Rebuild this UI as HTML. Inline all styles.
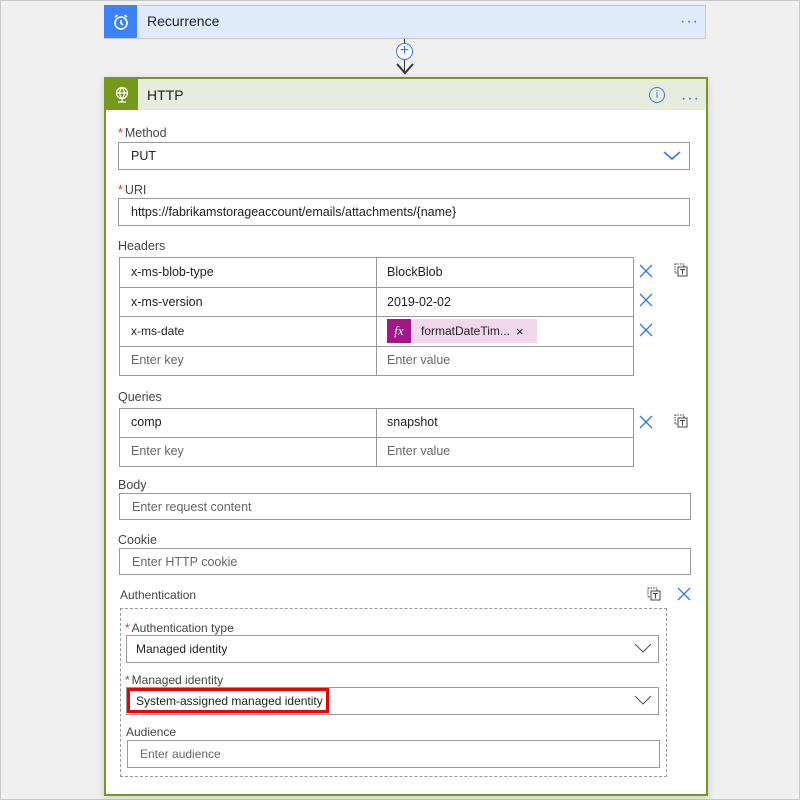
<!DOCTYPE html>
<html><head><style>
*{box-sizing:border-box;margin:0;padding:0}
body{width:800px;height:800px;background:#f0f0f0;font-family:"Liberation Sans",sans-serif;font-size:12.5px;color:#222;position:relative;overflow:hidden}
.a{position:absolute}
.lbl{position:absolute;color:#444;font-size:12.5px}
.lbl b{color:#d13438;font-weight:normal;margin-right:2px}
.in{position:absolute;border:1px solid #999;background:#fff;padding-left:12px;display:flex;align-items:center;font-size:12.5px}
.ph{color:#666}
.x{position:absolute;width:14px;height:14px}
.dots{position:absolute;color:#2f6fd0;font-size:16px;letter-spacing:1px;line-height:10px}
</style></head><body>
<div class="a" style="left:0;top:0;width:800px;height:800px;border:1px solid #c8c8c8"></div>
<!-- recurrence -->
<div class="a" style="left:104px;top:5px;width:602px;height:34px;background:#dfeafb;border:1px solid #c8c8c8"></div>
<div class="a" style="left:104px;top:5px;width:33px;height:33px;background:#3b82f6;display:flex;align-items:center;justify-content:center">
<svg width="18" height="18" viewBox="0 0 18 18" fill="none" stroke="#fff" stroke-width="1.6"><circle cx="9" cy="10" r="6"/><path d="M9 7v3.5l2 1.5M3 4l2.5-2M15 4l-2.5-2"/></svg></div>
<div class="a" style="left:147px;top:13px;font-size:14px">Recurrence</div>
<div class="dots" style="left:680px;top:17px">···</div>
<!-- connector -->
<div class="a" style="left:404px;top:39px;width:1px;height:34px;background:#333"></div>
<div class="a" style="left:396px;top:43px;width:17px;height:17px;border:1px solid #3b7bd4;border-radius:50%;background:#fff;color:#3b7bd4;font-size:16px;line-height:14px;text-align:center">+</div>
<svg class="a" style="left:395px;top:62px" width="20" height="14"><path d="M2 2l8 9 8-9" fill="none" stroke="#333" stroke-width="2"/></svg>
<!-- http card -->
<div class="a" style="left:104px;top:77px;width:604px;height:719px;background:#fff;border:2px solid #749a1c;box-shadow:0 2px 8px rgba(0,0,0,.15)"></div>
<div class="a" style="left:106px;top:79px;width:600px;height:31px;background:#e8ecdc"></div>
<div class="a" style="left:106px;top:79px;width:32px;height:31px;background:#749a1c;display:flex;align-items:center;justify-content:center">
<svg width="16" height="18" viewBox="0 0 16 18" fill="none" stroke="#fff" stroke-width="1.2"><circle cx="8" cy="7" r="5.5"/><path d="M2.5 7h11M8 1.5c-3 3-3 8 0 11M8 1.5c3 3 3 8 0 11M8 12.5v3M4 16h8"/></svg></div>
<div class="a" style="left:147px;top:87px;font-size:14px">HTTP</div>
<div class="a" style="left:649px;top:87px;width:16px;height:16px;border:1.3px solid #3b7bd4;border-radius:50%;color:#3b7bd4;font-size:11px;text-align:center;line-height:14px">i</div>
<div class="dots" style="left:681px;top:94px">···</div>

<div class="lbl" style="left:118px;top:126px"><b>*</b>Method</div>
<div class="in" style="left:118px;top:142px;width:572px;height:28px">PUT</div>
<svg class="a" style="left:663px;top:150px" width="18" height="12"><path d="M1 2l8 7 8-7" fill="none" stroke="#2f7bd8" stroke-width="1.6"/></svg>
<div class="lbl" style="left:118px;top:183px"><b>*</b>URI</div>
<div class="in" style="left:118px;top:198px;width:572px;height:28px">https://fabrikamstorageaccount/emails/attachments/{name}</div>

<div class="lbl" style="left:118px;top:239px">Headers</div>
<div class="a" style="left:119px;top:257px;width:515px;height:119px;border:1px solid #999;background:linear-gradient(#999,#999) 256px 0/1px 100% no-repeat"></div>
<div class="a" style="left:119px;top:287px;width:515px;height:1px;background:#999"></div>
<div class="a" style="left:119px;top:316px;width:515px;height:1px;background:#999"></div>
<div class="a" style="left:119px;top:346px;width:515px;height:1px;background:#999"></div>
<div class="a" style="left:131px;top:265px">x-ms-blob-type</div><div class="a" style="left:387px;top:265px">BlockBlob</div>
<div class="a" style="left:131px;top:295px">x-ms-version</div><div class="a" style="left:387px;top:295px">2019-02-02</div>
<div class="a" style="left:131px;top:324px;font-size:12px">x-ms-date</div>
<div class="a" style="left:387px;top:319px;width:150px;height:24px;background:#f2d7ec"></div>
<div class="a" style="left:387px;top:319px;width:24px;height:24px;background:#a4148a;color:#fff;font-family:'Liberation Serif',serif;font-style:italic;font-size:13px;text-align:center;line-height:23px">fx</div>
<div class="a" style="left:421px;top:324px;font-size:12px">formatDateTim...</div>
<div class="a" style="left:516px;top:324px;font-size:13px">×</div>
<div class="a ph" style="left:131px;top:353px">Enter key</div><div class="a ph" style="left:387px;top:353px">Enter value</div>

<div class="lbl" style="left:118px;top:390px">Queries</div>
<div class="a" style="left:119px;top:408px;width:515px;height:59px;border:1px solid #999;background:linear-gradient(#999,#999) 256px 0/1px 100% no-repeat"></div>
<div class="a" style="left:119px;top:437px;width:515px;height:1px;background:#999"></div>
<div class="a" style="left:131px;top:415px">comp</div><div class="a" style="left:387px;top:415px">snapshot</div>
<div class="a ph" style="left:131px;top:444px">Enter key</div><div class="a ph" style="left:387px;top:444px">Enter value</div>

<svg class="x" style="left:639px;top:264px" viewBox="0 0 14 14"><path d="M1 1l12 12M13 1L1 13" stroke="#2f7bd8" stroke-width="1.3"/></svg>
<svg class="x" style="left:639px;top:293px" viewBox="0 0 14 14"><path d="M1 1l12 12M13 1L1 13" stroke="#2f7bd8" stroke-width="1.3"/></svg>
<svg class="x" style="left:639px;top:323px" viewBox="0 0 14 14"><path d="M1 1l12 12M13 1L1 13" stroke="#2f7bd8" stroke-width="1.3"/></svg>
<svg class="x" style="left:639px;top:415px" viewBox="0 0 14 14"><path d="M1 1l12 12M13 1L1 13" stroke="#2f7bd8" stroke-width="1.3"/></svg>
<svg class="x" style="left:677px;top:587px" viewBox="0 0 14 14"><path d="M1 1l12 12M13 1L1 13" stroke="#2f7bd8" stroke-width="1.3"/></svg>
<svg class="x" style="left:674px;top:263px" viewBox="0 0 14 14" fill="none" stroke="#444"><rect x="1" y="1" width="9" height="9" stroke-dasharray="1.5 1"/><rect x="4" y="4" width="9" height="9" fill="#fff"/><path d="M6 6.5h5M8.5 6.5v5"/></svg>
<svg class="x" style="left:674px;top:414px" viewBox="0 0 14 14" fill="none" stroke="#444"><rect x="1" y="1" width="9" height="9" stroke-dasharray="1.5 1"/><rect x="4" y="4" width="9" height="9" fill="#fff"/><path d="M6 6.5h5M8.5 6.5v5"/></svg>
<svg class="x" style="left:647px;top:587px" viewBox="0 0 14 14" fill="none" stroke="#444"><rect x="1" y="1" width="9" height="9" stroke-dasharray="1.5 1"/><rect x="4" y="4" width="9" height="9" fill="#fff"/><path d="M6 6.5h5M8.5 6.5v5"/></svg>

<div class="lbl" style="left:118px;top:478px">Body</div>
<div class="in ph" style="left:119px;top:493px;width:572px;height:27px">Enter request content</div>
<div class="lbl" style="left:118px;top:533px">Cookie</div>
<div class="in ph" style="left:119px;top:548px;width:572px;height:27px">Enter HTTP cookie</div>

<div class="lbl" style="left:120px;top:588px;font-size:12px">Authentication</div>
<div class="a" style="left:120px;top:608px;width:547px;height:169px;border:1px dashed #999"></div>
<div class="lbl" style="left:125px;top:621px;font-size:12px"><b>*</b>Authentication type</div>
<div class="in" style="left:126px;top:635px;width:533px;height:28px;font-size:12px;padding-left:9px">Managed identity</div>
<svg class="a" style="left:634px;top:643px" width="18" height="11"><path d="M1 1l8 8 8-8" fill="none" stroke="#555" stroke-width="1.1"/></svg>
<div class="lbl" style="left:125px;top:673px;font-size:12px"><b>*</b>Managed identity</div>
<div class="in" style="left:126px;top:687px;width:533px;height:28px;font-size:12px;padding-left:9px">System-assigned managed identity</div>
<div class="a" style="left:127px;top:688px;width:202px;height:25px;border:3px solid #e00"></div>
<svg class="a" style="left:634px;top:695px" width="18" height="11"><path d="M1 1l8 8 8-8" fill="none" stroke="#555" stroke-width="1.1"/></svg>
<div class="lbl" style="left:126px;top:725px;font-size:12px">Audience</div>
<div class="in ph" style="left:127px;top:740px;width:533px;height:28px;font-size:12px">Enter audience</div>
</body></html>
